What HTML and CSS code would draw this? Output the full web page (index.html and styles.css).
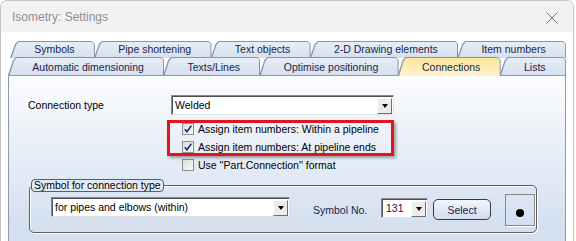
FILE: index.html
```html
<!DOCTYPE html>
<html lang="en">
<head>
  <meta charset="UTF-8">
  <title>Isometry: Settings</title>
  <link rel="stylesheet" href="styles.css">
</head>
<body>
  <div class="window">
    <div class="titlebar">
      <span class="title">Isometry: Settings</span>
      <svg class="close" width="12" height="12" viewBox="0 0 12 12">
        <path d="M0.5 0.5 L11.5 11.5 M11.5 0.5 L0.5 11.5" stroke="#7d7d7d" stroke-width="1" fill="none"/>
      </svg>
    </div>

    <div class="client">
      <div class="tabrow row1">
        <div class="tab">Symbols</div>
        <div class="tab">Pipe shortening</div>
        <div class="tab">Text objects</div>
        <div class="tab">2-D Drawing elements</div>
        <div class="tab">Item numbers</div>
      </div>
      <div class="tabrow row2">
        <div class="tab">Automatic dimensioning</div>
        <div class="tab">Texts/Lines</div>
        <div class="tab">Optimise positioning</div>
        <div class="tab active">Connections</div>
        <div class="tab">Lists</div>
      </div>

      <div class="panel">
        <div class="field-row">
          <span class="label">Connection type</span>
          <div class="combo combo-type">
            <span class="combo-text">Welded</span>
            <span class="combo-btn"></span>
          </div>
        </div>

        <div class="checks">
          <div class="highlight"></div>
          <div class="check">
            <span class="box">
              <svg width="10" height="10" viewBox="0 0 10 10"><path d="M1.8 5.2 L4 7.8 L8.4 1.6" stroke="#1d2180" stroke-width="1.6" fill="none"/></svg>
            </span>
            Assign item numbers: Within a pipeline
          </div>
          <div class="check">
            <span class="box">
              <svg width="10" height="10" viewBox="0 0 10 10"><path d="M1.8 5.2 L4 7.8 L8.4 1.6" stroke="#1d2180" stroke-width="1.6" fill="none"/></svg>
            </span>
            Assign item numbers: At pipeline ends
          </div>
          <div class="check">
            <span class="box"></span>
            Use ''Part.Connection'' format
          </div>
        </div>

        <fieldset class="group">
          <legend>Symbol for connection type</legend>
          <div class="group-row">
            <div class="combo combo-symbol">
              <span class="combo-text">for pipes and elbows (within)</span>
              <span class="combo-btn"></span>
            </div>
            <span class="label symbol-label">Symbol No.</span>
            <div class="combo combo-number">
              <span class="combo-text number">131</span>
              <span class="combo-btn"></span>
            </div>
            <button class="btn">Select</button>
            <div class="preview"><span class="dot"></span></div>
          </div>
        </fieldset>
      </div>
    </div>
  </div>
</body>
</html>
```

FILE: styles.css
```css
body {
  margin: 0;
  width: 576px;
  height: 241px;
  overflow: hidden;
  background: #fff;
  font-family: "Liberation Sans", Arial, sans-serif;
  font-size: 10.5px;
  color: #000;
}
.window {
  width: 574px;
  height: 241px;
  box-sizing: border-box;
  border: 1px solid #c4c4c4;
  border-bottom: none;
  border-radius: 7px 7px 0 0;
  background: #fff;
  overflow: hidden;
}
.titlebar {
  height: 31px;
  background: #f2f2f2;
  display: flex;
  align-items: center;
  justify-content: space-between;
  padding: 0 15px 0 11px;
}
.title {
  font-size: 12px;
  color: #8e8e8e;
  margin-top: 1px;
}
.close {
  margin-top: 2px;
}
.client {
  padding: 9px 7px 0 7px;
}

/* tabs */
.tabrow {
  display: flex;
}
.row1 {
  height: 17px;
  margin-left: 2px;
}
.row2 {
  height: 18px;
  margin-top: -1px;
}
.tab {
  position: relative;
  isolation: isolate;
  flex: 1 1 auto;
  margin-right: -1px;
  padding: 0 4px 0 8px;
  text-align: center;
  white-space: nowrap;
  color: #1a1f4c;
  line-height: 17px;
}
.row2 .tab {
  padding-top: 2px;
  line-height: 16px;
}
.tab:last-child {
  margin-right: 0;
}
.tab::before,
.tab::after {
  content: "";
  position: absolute;
  z-index: -1;
}
.tab::before {
  inset: 0;
  background: #8794aa;
  clip-path: polygon(0 100%, 5px 3px, 8px 0, calc(100% - 3px) 0, 100% 3px, 100% 100%);
}
.tab::after {
  inset: 1px 1px 0 1.5px;
  background: linear-gradient(#e6edf7, #d6e0ee);
  clip-path: polygon(0 100%, 4.5px 3px, 7px 0, calc(100% - 2px) 0, 100% 2px, 100% 100%);
}
.tab.active::before {
  bottom: -1px;
}
.tab.active::after {
  bottom: -1px;
  background: linear-gradient(#fde59b, #fff3cc);
}

/* page */
.panel {
  height: 166px;
  border: 1px solid #8c99ae;
  border-bottom: none;
  background: linear-gradient(#fbfcfe, #d4e0f0 150px);
  padding: 19px 0 0 19px;
  box-sizing: border-box;
}
.field-row {
  display: flex;
  align-items: center;
}
.label {
  width: 143px;
}
.combo {
  position: relative;
  box-sizing: border-box;
  height: 20px;
  background: #fff;
  border: 1px solid;
  border-color: #8a8a8a #e2e2e2 #e2e2e2 #8a8a8a;
  box-shadow: inset 1px 1px 0 #505050;
  display: flex;
  align-items: center;
}
.combo-type {
  width: 223px;
}
.combo-text {
  padding-left: 3px;
  flex: 1;
}
.combo-text.number {
  color: #3b0b3b;
  padding-left: 4px;
}
.combo-btn {
  width: 15px;
  height: 16px;
  margin-right: 1px;
  margin-top: 1px;
  box-sizing: border-box;
  border: 1px solid;
  border-color: #fff #6f6f6f #6f6f6f #fff;
  background: #ececec;
  display: flex;
  align-items: center;
  justify-content: center;
}
.combo-btn::after {
  content: "";
  border-style: solid;
  border-width: 4px 3.5px 0 3.5px;
  border-color: #000 transparent transparent transparent;
}

/* check boxes */
.checks {
  position: relative;
  margin: 5px 0 0 154px;
}
.check {
  display: flex;
  align-items: center;
  height: 18px;
  gap: 4px;
}
.box {
  width: 12px;
  height: 12px;
  box-sizing: border-box;
  border: 1px solid #8e8f8f;
  background: linear-gradient(135deg, #dcdcdc, #fafafa);
  display: flex;
  align-items: center;
  justify-content: center;
}
.highlight {
  position: absolute;
  left: -15px;
  top: 0;
  width: 227px;
  height: 36px;
  box-sizing: border-box;
  border: 3px solid #e3151c;
  box-shadow: 2px 2px 3px rgba(0, 0, 0, 0.35);
}

/* group box */
.group {
  margin: 5px 0 0 1px;
  width: 508px;
  box-sizing: border-box;
  padding: 0;
  border: 1px solid #5e5e5e;
  border-radius: 5px;
  box-shadow: 1px 1px 0 #fff, inset 1px 1px 0 #fff;
}
.group legend {
  margin-left: 1px;
  padding: 0 2px;
  line-height: 11px;
  border: 1px solid #5e5e5e;
  border-radius: 4px;
  color: #000;
}
.group-row {
  display: flex;
  align-items: flex-start;
  padding: 2px 0 6px 21px;
}
.combo-symbol {
  width: 239px;
  margin-top: 3px;
}
.symbol-label {
  width: 68px;
  margin: 9px 0 0 23px;
  line-height: 14px;
  color: #1a1f4c;
}
.combo-number {
  width: 47px;
  margin-top: 4px;
}
.btn {
  width: 58px;
  height: 21px;
  margin: 5px 0 0 5px;
  padding: 0;
  font: inherit;
  color: #1a1f4c;
  border: 1px solid #3a3a3a;
  border-radius: 5px;
  background: linear-gradient(#f3f6fb, #d2dcee);
}
.preview {
  width: 30px;
  height: 32px;
  margin-left: 14px;
  box-sizing: border-box;
  border: 1px solid #888;
  box-shadow: 1px 1px 0 #fff;
  display: flex;
  align-items: center;
  justify-content: center;
}
.dot {
  width: 8px;
  height: 8px;
  margin-top: 6px;
  border-radius: 50%;
  background: #000;
}
```
